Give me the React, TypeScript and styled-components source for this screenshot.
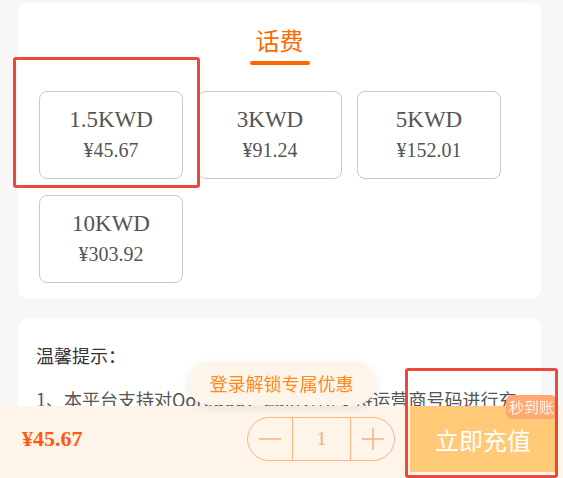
import React, { useState } from 'react';
import styled, { createGlobalStyle } from 'styled-components';

const GlobalStyle = createGlobalStyle`
  html, body {
    margin: 0;
    padding: 0;
    background: #f7f7f7;
  }
  body {
    width: 563px;
    height: 478px;
    overflow: hidden;
    font-family: "Noto Sans CJK SC", "Noto Sans", sans-serif;
  }
  * {
    box-sizing: border-box;
  }
`;

const StyledPage = styled.div`
  padding: 3px 22px 0 18px;
`;

const StyledCard = styled.div<{ $gap?: number }>`
  background: #fff;
  border-radius: 10px;
  margin-top: ${({ $gap }) => ($gap ? `${$gap}px` : '0')};
`;

const StyledRechargeCard = styled(StyledCard)`
  padding: 22px 0 16px 21px;
`;

const StyledTitle = styled.div`
  display: flex;
  flex-direction: column;
  align-items: center;
  margin-left: -21px;

  h1 {
    margin: 0;
    font-size: 24px;
    line-height: 30px;
    font-weight: 400;
    color: #ff6a00;
  }

  span {
    display: block;
    width: 60px;
    height: 4px;
    margin-top: 6px;
    border-radius: 2px;
    background: #ff6600;
  }
`;

const StyledOptions = styled.div`
  display: grid;
  grid-template-columns: repeat(3, 144px);
  column-gap: 15px;
  row-gap: 16px;
  margin-top: 26px;
`;

const StyledOption = styled.div<{ $active?: boolean }>`
  height: 88px;
  border: 1px solid #c9c9c9;
  border-radius: 8px;
  display: flex;
  flex-direction: column;
  align-items: center;
  justify-content: center;
  font-family: "Liberation Serif", "Times New Roman", serif;
  color: #555;
  cursor: pointer;

  b {
    font-weight: 400;
    font-size: 23px;
    line-height: 31px;
  }

  small {
    font-size: 20px;
    line-height: 31px;
  }
`;

const StyledTipsCard = styled(StyledCard)`
  padding: 24px 18px 18px 18px;
  height: 160px;

  h2 {
    margin: 0;
    font-size: 18px;
    line-height: 26px;
    font-weight: 400;
    color: #333;
  }

  p {
    margin: 17px 0 0;
    font-size: 18px;
    line-height: 28px;
    height: 28px;
    color: #555;
    overflow: hidden;
  }
`;

const StyledBottomBar = styled.div`
  position: fixed;
  left: 0;
  right: 0;
  bottom: 0;
  height: 72px;
  padding: 0 7px 6px 22px;
  background: #fef4ea;
  display: flex;
  flex-direction: row;
  align-items: center;
  z-index: 2;
`;

const StyledPrice = styled.div`
  font-family: "Liberation Serif", "Times New Roman", serif;
  font-weight: bold;
  font-size: 22px;
  color: #ff5a0a;
`;

const StyledStepper = styled.div`
  margin-left: auto;
  margin-right: 15px;
  height: 44px;
  border: 1px solid #ffb37f;
  border-radius: 22px;
  display: flex;
  flex-direction: row;
  align-items: stretch;
`;

const StyledStepButton = styled.div<{ $width: number }>`
  width: ${({ $width }) => $width}px;
  display: flex;
  align-items: center;
  justify-content: center;
  cursor: pointer;
`;

const StyledCount = styled.div`
  width: 59px;
  border-left: 1px solid #ffb37f;
  border-right: 1px solid #ffb37f;
  display: flex;
  align-items: center;
  justify-content: center;
  font-family: "Liberation Serif", "Times New Roman", serif;
  font-size: 19px;
  color: #f7a86f;
`;

const StyledSubmit = styled.button`
  position: relative;
  width: 146px;
  height: 66px;
  border: 0;
  padding: 0;
  background: #ffc978;
  color: #fff;
  font-family: "Noto Sans CJK SC", "Noto Sans", sans-serif;
  font-size: 24px;
  cursor: pointer;
`;

const StyledBadge = styled.span`
  position: absolute;
  top: -11px;
  right: -1px;
  height: 24px;
  padding: 0 3px;
  border-radius: 6px;
  background: #ffa972;
  color: #fff4ec;
  font-size: 15px;
  line-height: 24px;
`;

const StyledLoginTip = styled.div`
  position: absolute;
  bottom: calc(100% + 1px);
  left: 50%;
  transform: translateX(-50%);
  height: 43px;
  padding: 0 22px;
  border-radius: 22px;
  background: #fdf4ea;
  box-shadow: 0 3px 8px rgba(120, 80, 40, 0.12);
  color: #ff8a1c;
  font-size: 18px;
  line-height: 43px;
  white-space: nowrap;
`;

const StyledMark = styled.div<{ $x: number; $y: number; $w: number; $h: number }>`
  position: fixed;
  left: ${({ $x }) => $x}px;
  top: ${({ $y }) => $y}px;
  width: ${({ $w }) => $w}px;
  height: ${({ $h }) => $h}px;
  border: 3px solid #ea4a3c;
  border-radius: 3px;
  pointer-events: none;
  z-index: 5;
`;

const options = [
  { amount: '1.5KWD', price: '¥45.67' },
  { amount: '3KWD', price: '¥91.24' },
  { amount: '5KWD', price: '¥152.01' },
  { amount: '10KWD', price: '¥303.92' },
];

const Minus = () => (
  <svg width="24" height="24" viewBox="0 0 24 24">
    <line x1="1" y1="12" x2="23" y2="12" stroke="#ffb37f" strokeWidth="1.6" />
  </svg>
);

const Plus = () => (
  <svg width="24" height="24" viewBox="0 0 24 24">
    <line x1="1" y1="12" x2="23" y2="12" stroke="#ffb37f" strokeWidth="1.6" />
    <line x1="12" y1="1" x2="12" y2="23" stroke="#ffb37f" strokeWidth="1.6" />
  </svg>
);

export default function App() {
  const [selected, setSelected] = useState(0);
  const [count, setCount] = useState(1);

  return (
    <>
      <GlobalStyle />
      <StyledPage>
        <StyledRechargeCard>
          <StyledTitle>
            <h1>话费</h1>
            <span />
          </StyledTitle>
          <StyledOptions>
            {options.map((o, i) => (
              <StyledOption key={o.amount} $active={i === selected} onClick={() => setSelected(i)}>
                <b>{o.amount}</b>
                <small>{o.price}</small>
              </StyledOption>
            ))}
          </StyledOptions>
        </StyledRechargeCard>
        <StyledTipsCard $gap={19}>
          <h2>温馨提示：</h2>
          <p>1、本平台支持对Ooredoo、Zain等所支持运营商号码进行充值</p>
        </StyledTipsCard>
      </StyledPage>

      <StyledBottomBar>
        <StyledLoginTip>登录解锁专属优惠</StyledLoginTip>
        <StyledPrice>{options[selected].price}</StyledPrice>
        <StyledStepper>
          <StyledStepButton $width={44} onClick={() => setCount(Math.max(1, count - 1))}>
            <Minus />
          </StyledStepButton>
          <StyledCount>{count}</StyledCount>
          <StyledStepButton $width={43} onClick={() => setCount(count + 1)}>
            <Plus />
          </StyledStepButton>
        </StyledStepper>
        <StyledSubmit>
          立即充值
          <StyledBadge>秒到账</StyledBadge>
        </StyledSubmit>
      </StyledBottomBar>

      <StyledMark $x={13} $y={57} $w={187} $h={131} />
      <StyledMark $x={405} $y={368} $w={153} $h={110} />
    </>
  );
}
